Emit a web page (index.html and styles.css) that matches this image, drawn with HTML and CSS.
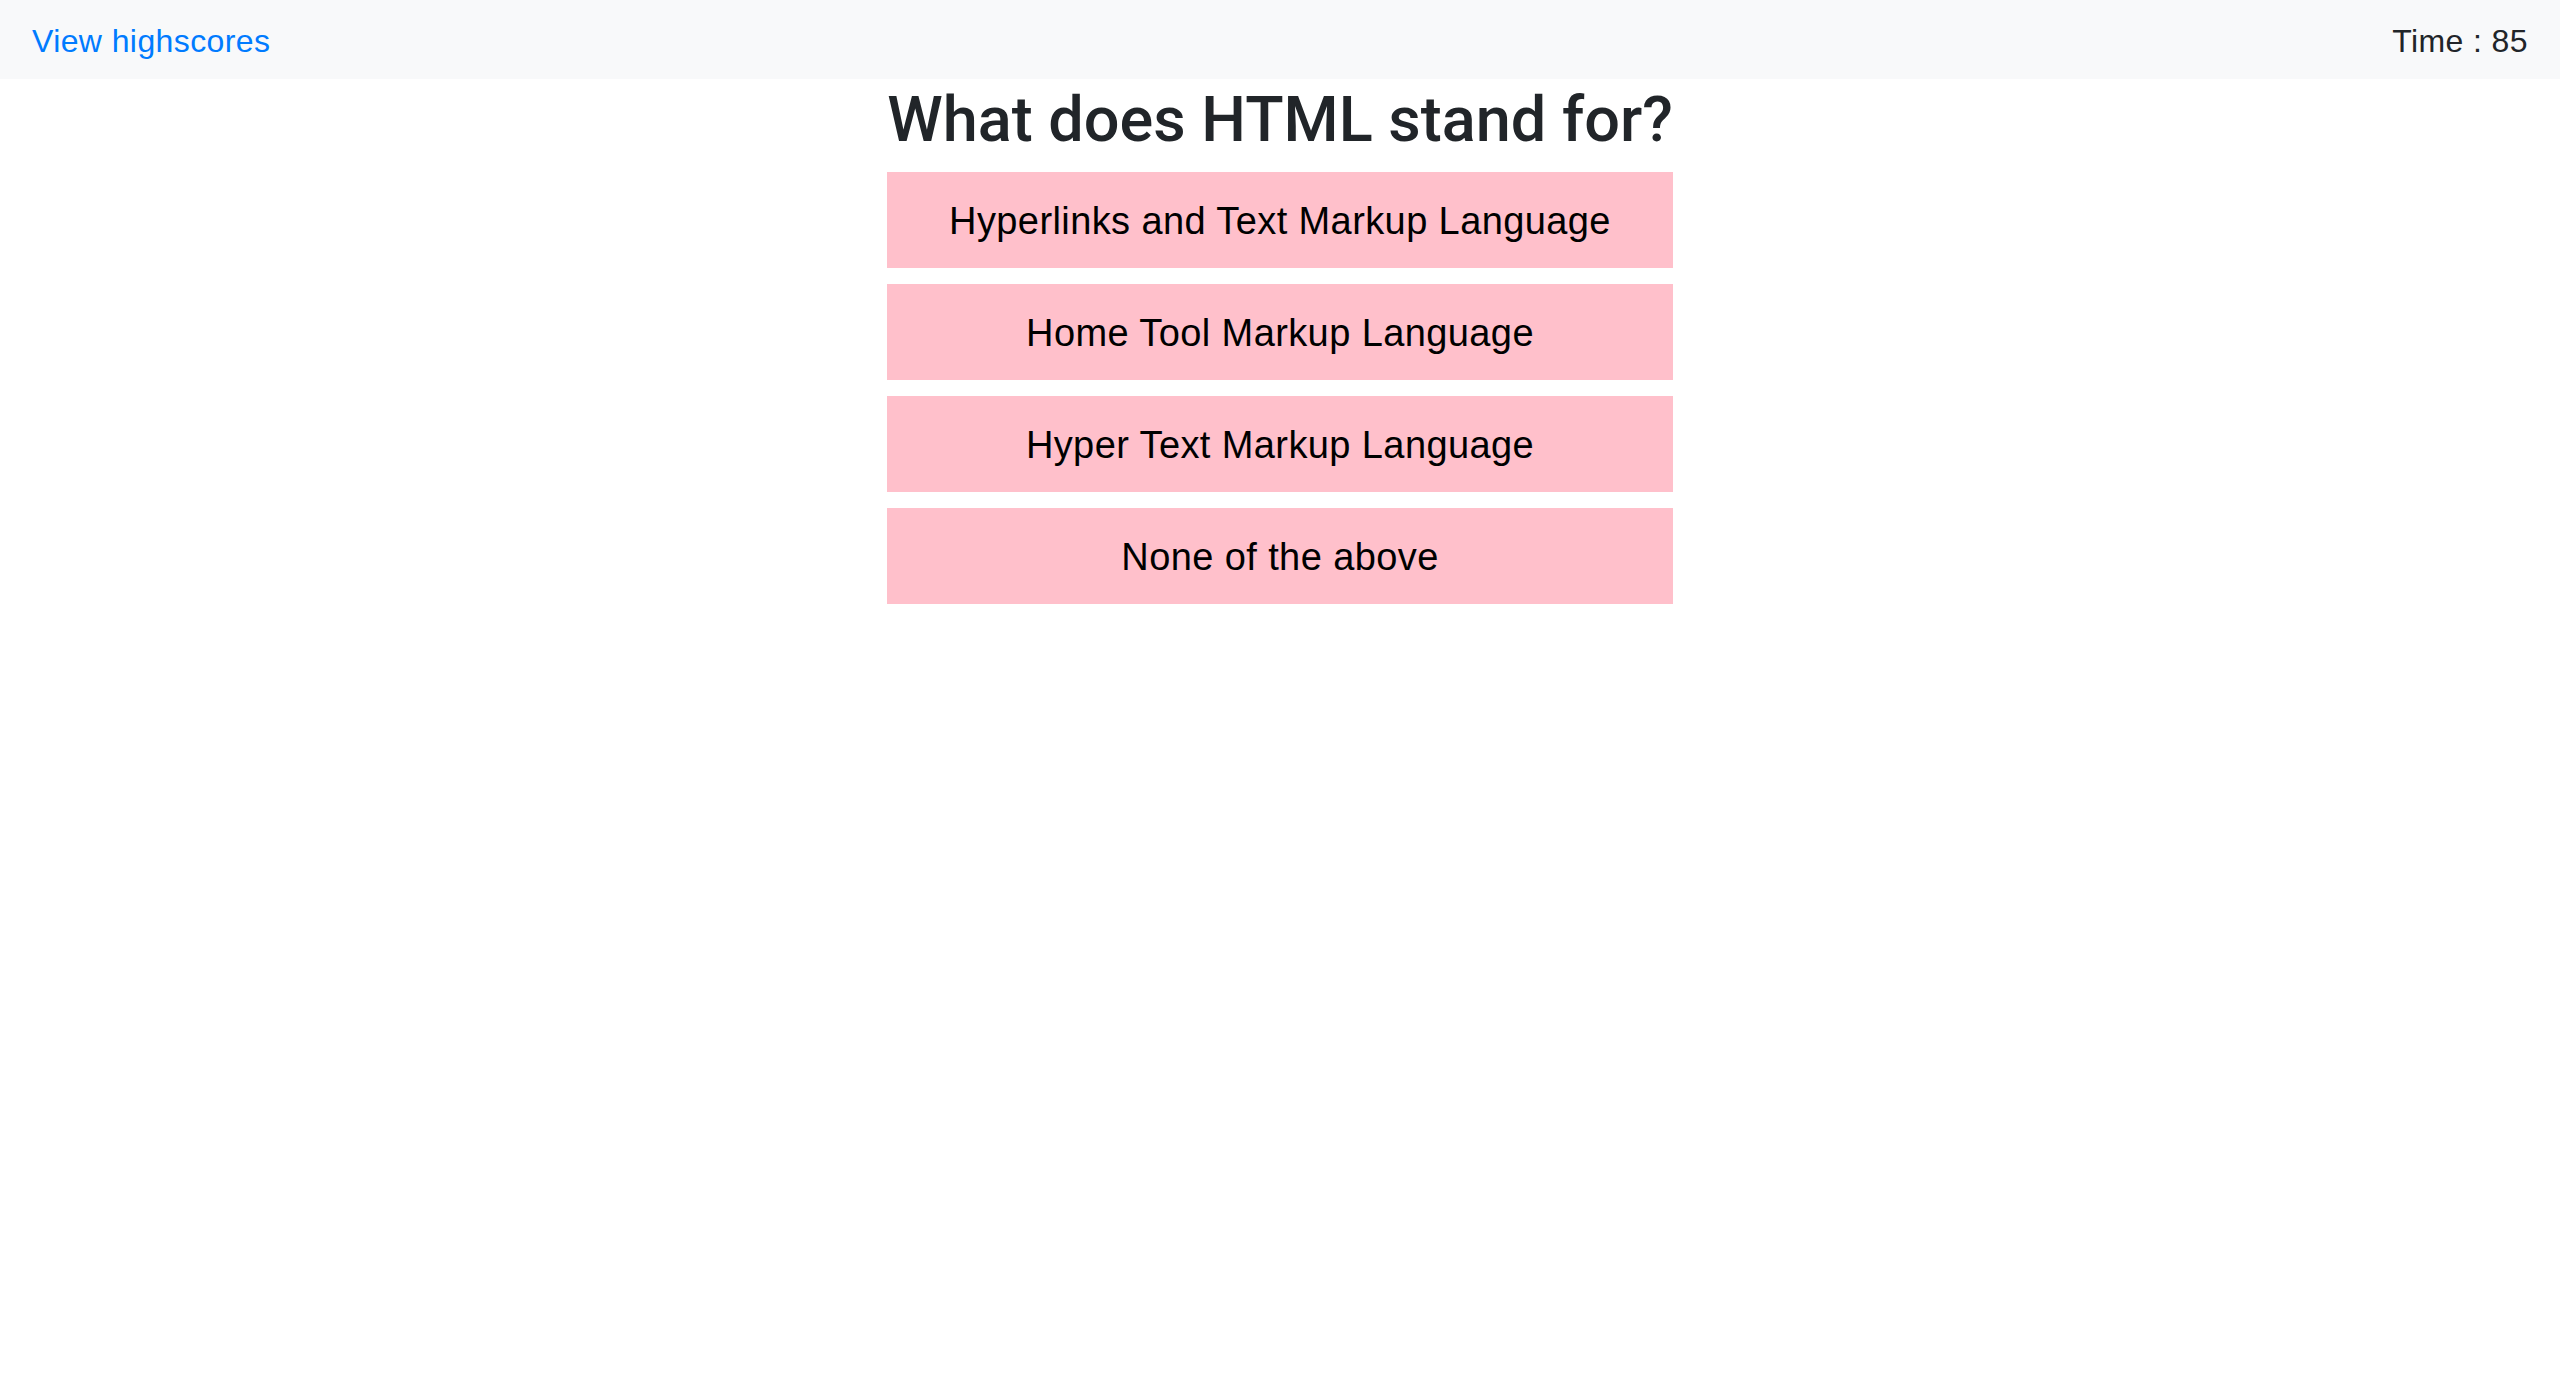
FILE: index.html
```html
<!DOCTYPE html>
<html lang="en">
<head>
<meta charset="utf-8">
<title>Code Quiz</title>
<link rel="stylesheet" href="styles.css">
</head>
<body>
<nav class="navbar">
  <a class="nav-link" href="#">View highscores</a>
  <span class="timer">Time : 85</span>
</nav>
<main class="main">
  <div class="quiz">
    <h1 class="question">What does HTML stand for?</h1>
    <div class="answers">
      <button class="answer">Hyperlinks and Text Markup Language</button>
      <button class="answer">Home Tool Markup Language</button>
      <button class="answer">Hyper Text Markup Language</button>
      <button class="answer">None of the above</button>
    </div>
  </div>
</main>
</body>
</html>
```
FILE: styles.css
```css
html, body {
  margin: 0;
  padding: 0;
  background: #fff;
}
body {
  font-family: "Liberation Sans", Arial, Helvetica, sans-serif;
  color: #212529;
  font-size: 32px;
}
.navbar {
  display: flex;
  justify-content: space-between;
  align-items: center;
  height: 79px;
  padding: 3px 32px 0 32px;
  background: #f8f9fa;
  box-sizing: border-box;
}
.nav-link {
  color: #007bff;
  text-decoration: none;
  font-size: 32px;
  letter-spacing: 0.4px;
}
.timer {
  font-size: 32px;
  letter-spacing: 0.4px;
  color: #212529;
}
.main {
  display: flex;
  justify-content: center;
}
.quiz {
  width: fit-content;
  display: flex;
  flex-direction: column;
}
.question {
  margin: 3px 0 14px 0;
  font-family: Roboto, "Liberation Sans", Arial, sans-serif;
  font-size: 63px;
  font-weight: 500;
  line-height: 1.2;
  color: #212529;
  white-space: nowrap;
}
.answers {
  display: flex;
  flex-direction: column;
  gap: 16px;
}
.answer {
  height: 96px;
  border: none;
  background: #ffc0cb;
  color: #000;
  font-family: "Liberation Sans", Arial, Helvetica, sans-serif;
  font-size: 38px;
  letter-spacing: 0.4px;
  padding: 3px 0 0 0;
  cursor: pointer;
}
```
